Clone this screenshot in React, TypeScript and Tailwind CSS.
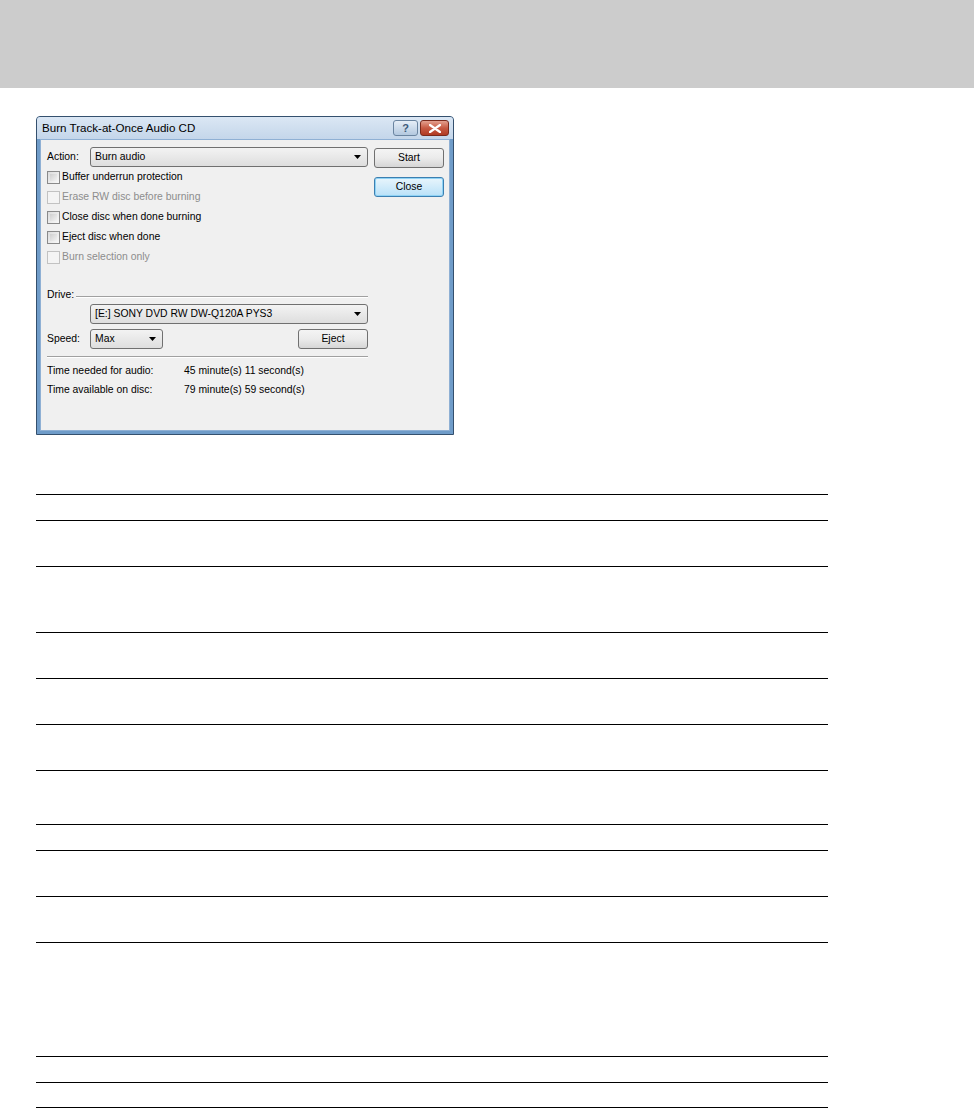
import React from "react";

const font = { fontFamily: '"Liberation Sans", Arial, sans-serif' };

type CheckProps = { label: string; disabled?: boolean };

const Check: React.FC<CheckProps> = ({ label, disabled }) => (
  <div className="flex h-[20px] items-center gap-[2px]">
    <div
      className={`size-[13px] border ${
        disabled
          ? "border-[#c2c2c2] bg-[#f4f4f4]"
          : "border-[#8a8a8a] bg-gradient-to-br from-[#dcdcdc] to-[#f8f8f8]"
      }`}
    >
      <div className={`m-[2px] size-[7px] ${disabled ? "" : "bg-gradient-to-br from-[#cfcfcf] to-[#f2f2f2]"}`} />
    </div>
    <span className={disabled ? "text-[#8d8d8d]" : "text-black"}>{label}</span>
  </div>
);

const Combo: React.FC<{ value: string; width: string }> = ({ value, width }) => (
  <div
    className={`${width} flex h-[20px] items-center justify-between rounded-[3px] border border-[#707070] bg-gradient-to-b from-[#f3f3f3] to-[#dedede] pl-[4px] pr-[6px]`}
  >
    <span>{value}</span>
    <svg width="7" height="4" viewBox="0 0 7 4">
      <path d="M0 0h7L3.5 4z" fill="#000" />
    </svg>
  </div>
);

const Button: React.FC<{ label: string; isDefault?: boolean }> = ({ label, isDefault }) => (
  <div
    className={`flex h-[20px] w-[70px] items-center justify-center rounded-[3px] border ${
      isDefault
        ? "border-[#3c7fb1] bg-gradient-to-b from-[#e8f5fc] to-[#b9e1f8] shadow-[inset_0_0_0_1px_#8fd3f5]"
        : "border-[#707070] bg-gradient-to-b from-[#f4f4f4] via-[#ebebeb] to-[#d6d6d6]"
    }`}
  >
    {label}
  </div>
);

const rows = [26, 46, 66, 46, 46, 46, 54, 26, 46, 46, 114, 26, 26];

export default function App() {
  return (
    <div className="min-h-[1109px] w-full bg-white" style={font}>
      <div className="h-[88px] w-full bg-[#cccccc]" />

      {/* Dialog screenshot */}
      <div className="ml-[36px] mt-[28px] flex h-[319px] w-[418px] flex-col rounded-t-[4px] border border-[#34506e] bg-[#6f9cc9] text-[10.4px] leading-none text-black">
        <div className="flex h-[22px] items-center justify-between rounded-t-[3px] bg-gradient-to-b from-[#dbe7f4] to-[#c4d6ea] pl-[5px] pr-[4px]">
          <span className="text-[11.6px]">Burn Track-at-Once Audio CD</span>
          <div className="flex gap-[2px]">
            <div className="flex h-[16px] w-[25px] items-center justify-center rounded-[3px] border border-[#6a84a0] bg-gradient-to-b from-[#e6eef7] to-[#b3c8df] text-[11px] font-bold text-[#3d5a7a]">
              ?
            </div>
            <div className="flex h-[16px] w-[29px] items-center justify-center rounded-[3px] border border-[#7a2a1c] bg-gradient-to-b from-[#e3a08f] via-[#c75a43] to-[#b03a22]">
              <svg width="12" height="9" viewBox="0 0 12 9">
                <path d="M1 1l10 7M11 1L1 8" stroke="#fff" strokeWidth="2.2" strokeLinecap="round" />
              </svg>
            </div>
          </div>
        </div>

        <div className="mx-[3px] mb-[3px] flex flex-1 gap-[6px] border border-[#8fb0d4] bg-[#f0f0f0] pl-[6px] pt-[7px]">
          {/* Left column */}
          <div className="flex w-[321px] flex-col">
            <div className="flex h-[20px] items-center">
              <span className="w-[43px]">Action:</span>
              <Combo value="Burn audio" width="w-[278px]" />
            </div>
            <div>
              <Check label="Buffer underrun protection" />
              <Check label="Erase RW disc before burning" disabled />
              <Check label="Close disc when done burning" />
              <Check label="Eject disc when done" />
              <Check label="Burn selection only" disabled />
            </div>
            <div className="mt-[20px] flex h-[16px] items-center gap-[2px]">
              <span>Drive:</span>
              <div className="mt-[2px] flex-1 border-t border-[#a0a0a0] shadow-[0_1px_0_#ffffff]" />
            </div>
            <div className="ml-[43px] mt-px">
              <Combo value="[E:] SONY DVD RW DW-Q120A PYS3" width="w-[278px]" />
            </div>
            <div className="mt-[5px] flex h-[20px] items-center">
              <span className="w-[43px]">Speed:</span>
              <Combo value="Max" width="w-[73px]" />
              <div className="ml-auto">
                <Button label="Eject" />
              </div>
            </div>
            <div className="mt-[7px] border-t border-[#a0a0a0] shadow-[0_1px_0_#ffffff]" />
            <div className="mt-[5px]">
              <div className="flex h-[19px] items-center">
                <span className="w-[137px]">Time needed for audio:</span>
                <span>45 minute(s) 11 second(s)</span>
              </div>
              <div className="flex h-[19px] items-center">
                <span className="w-[137px]">Time available on disc:</span>
                <span>79 minute(s) 59 second(s)</span>
              </div>
            </div>
          </div>

          {/* Right column */}
          <div className="flex flex-col gap-[9px] pt-px">
            <Button label="Start" />
            <Button label="Close" isDefault />
          </div>
        </div>
      </div>

      {/* Ruled table */}
      <div className="ml-[36px] mt-[59px] w-[792px]">
        {rows.map((h, i) => (
          <div
            key={i}
            className={`border-t border-black ${i === rows.length - 1 ? "border-b" : ""}`}
            style={{ height: h }}
          />
        ))}
      </div>
    </div>
  );
}
